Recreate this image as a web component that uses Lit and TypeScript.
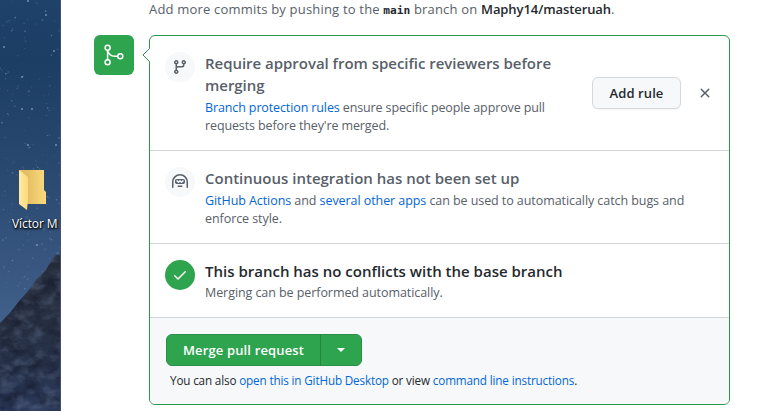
import { LitElement, html, css, svg } from "lit";
import { customElement } from "lit/decorators.js";

const BRANCH = "M11.75 2.5a.75.75 0 100 1.5.75.75 0 000-1.5zm-2.25.75a2.25 2.25 0 113 2.122V6A2.5 2.5 0 0110 8.5H6a1 1 0 00-1 1v1.128a2.251 2.251 0 11-1.5 0V5.372a2.25 2.25 0 111.5 0v1.836A2.492 2.492 0 016 7h4a1 1 0 001-1v-.628A2.25 2.25 0 019.5 3.25zM4.25 12a.75.75 0 100 1.5.75.75 0 000-1.5zM3.5 3.25a.75.75 0 111.5 0 .75.75 0 01-1.5 0z";
const HUBOT = "M0 8a8 8 0 1116 0v5.25a.75.75 0 01-1.5 0V8a6.5 6.5 0 10-13 0v5.25a.75.75 0 01-1.5 0V8zm5.5 4.25a.75.75 0 01.75-.75h3.5a.75.75 0 010 1.5h-3.5a.75.75 0 01-.75-.75zM3 6.75C3 5.784 3.784 5 4.75 5h6.5c.966 0 1.75.784 1.75 1.75v1.5A1.75 1.75 0 0111.25 10h-6.5A1.75 1.75 0 013 8.25v-1.5zm1.47-.53a.75.75 0 011.06 0l.97.97.97-.97a.75.75 0 011.06 0l.97.97.97-.97a.75.75 0 111.06 1.06l-1.5 1.5a.75.75 0 01-1.06 0L8 7.81l-.97.97a.75.75 0 01-1.06 0l-1.5-1.5a.75.75 0 010-1.06z";
const CHECK = "M13.78 4.22a.75.75 0 010 1.06l-7.25 7.25a.75.75 0 01-1.06 0L2.22 9.28a.75.75 0 011.06-1.06L6 10.94l6.72-6.72a.75.75 0 011.06 0z";
const CLOSE = "M3.72 3.72a.75.75 0 011.06 0L8 6.94l3.22-3.22a.75.75 0 111.06 1.06L9.06 8l3.22 3.22a.75.75 0 11-1.06 1.06L8 9.06l-3.22 3.22a.75.75 0 01-1.06-1.06L6.94 8 3.72 4.78a.75.75 0 010-1.06z";

const icon = (d: string) => html`<svg class="icon" width="16" height="16" viewBox="0 0 16 16"><path fill="currentColor" fill-rule="evenodd" d=${d} /></svg>`;

let seed = 17;
const rnd = () => (seed = (seed * 16807) % 2147483647) / 2147483647;
const stars = Array.from({ length: 170 }, () => ({ x: rnd() * 60, y: rnd() * 290, r: 0.4 + rnd() * 0.5, o: 0.1 + rnd() * 0.35 }));
const bright = [[22, 109], [32, 109], [37, 245], [4, 47], [28, 1], [22, 77], [28, 145], [56, 145], [46, 15], [54, 51]];
const RIDGE = "M0 323L10 313 20 300 29 290 36 280 46 270 53 258 56 255H61V411H0Z";

@customElement("desk-wallpaper")
export class DeskWallpaper extends LitElement {
  static styles = css`
    :host { display: block; position: relative; width: 61px; height: 411px; overflow: hidden; }
    .sky { display: block; }
    .item { position: absolute; left: 0; top: 168px; width: 61px; }
    .folder { display: block; margin-left: 18px; }
    .label { display: block; margin: 2px 0 0 12px; font: 12px/20px "Open Sans", "Noto Sans", sans-serif; letter-spacing: -0.1px; color: #fff; white-space: nowrap; text-shadow: 1px 1px 2px #000, 0 1px 2px #000; }
  `;
  render() {
    return html`
      <svg class="sky" width="61" height="411" viewBox="0 0 61 411">
        <defs>
          <linearGradient id="sky" x2="0" y2="1">
            <stop offset="0" stop-color="#1f426a" /><stop offset=".15" stop-color="#1c3d64" />
            <stop offset=".4" stop-color="#284870" /><stop offset=".65" stop-color="#38567f" />
            <stop offset=".8" stop-color="#42628c" />
          </linearGradient>
          <linearGradient id="rock" x2="0" y2="1">
            <stop offset="0" stop-color="#2d3443" /><stop offset=".45" stop-color="#262e40" /><stop offset="1" stop-color="#2a3859" />
          </linearGradient>
          <clipPath id="ridge"><path d=${RIDGE} /></clipPath>
          <filter id="stone" x="0" y="0" width="1" height="1" color-interpolation-filters="sRGB">
            <feTurbulence type="fractalNoise" baseFrequency=".07 .1" numOctaves="4" seed="8" />
            <feColorMatrix values="0 0 0 0 .35  0 0 0 0 .41  0 0 0 0 .52  2.6 0 0 0 -1.15" />
          </filter>
          <filter id="shade" x="0" y="0" width="1" height="1" color-interpolation-filters="sRGB">
            <feTurbulence type="fractalNoise" baseFrequency=".05 .07" numOctaves="4" seed="21" />
            <feColorMatrix values="0 0 0 0 .08  0 0 0 0 .1  0 0 0 0 .16  3 0 0 0 -1.25" />
          </filter>
        </defs>
        <rect width="61" height="411" fill="url(#sky)" />
        ${stars.map((s) => svg`<circle cx=${s.x} cy=${s.y} r=${s.r} fill="#9fbbd8" opacity=${s.o} />`)}
        ${bright.map(([x, y]) => svg`<circle cx=${x} cy=${y} r=".9" fill="#a9c4df" opacity=".65" />`)}
        <path d=${RIDGE} fill="url(#rock)" />
        <g clip-path="url(#ridge)">
          <rect y="250" width="61" height="161" filter="url(#shade)" opacity=".6" />
          <rect y="250" width="61" height="161" filter="url(#stone)" opacity=".5" />
        </g>
        <rect x="60" width="1" height="411" fill="#454f60" />
      </svg>
      <div class="item">
        <svg class="folder" width="30" height="44" viewBox="0 0 30 44">
          <defs>
            <linearGradient id="back"><stop offset=".3" stop-color="#e4be62" /><stop offset="1" stop-color="#fbdb7e" /></linearGradient>
            <linearGradient id="front"><stop stop-color="#ffeaa6" /><stop offset="1" stop-color="#fbd97c" /></linearGradient>
          </defs>
          <path d="M1 2H26V22L28 24V36H5Z" fill="url(#back)" />
          <path d="M1 2L10 9V31L9 42 1 36Z" fill="url(#front)" />
        </svg>
        <span class="label">Víctor M</span>
      </div>`;
  }
}

@customElement("app-root")
export class AppRoot extends LitElement {
  static styles = css`
    :host { display: flex; width: 778px; height: 411px; overflow: hidden; background: #fff; color: #24292e; font-family: "Open Sans", "Noto Sans", sans-serif; font-size: 13px; }
    * { box-sizing: border-box; }
    .icon { display: block; }
    .page { flex: 1; padding-left: 33px; }
    .push { height: 35px; padding-left: 55px; line-height: 19px; color: #586069; white-space: nowrap; letter-spacing: 0.19px; }
    .push b { font-weight: 600; color: #24292e; letter-spacing: -0.08px; }
    .push code { font: 600 11.2px "DejaVu Sans Mono", "Liberation Mono", monospace; color: #24292e; letter-spacing: 0; }
    .merge { display: flex; gap: 15px; }
    .badge { display: grid; place-items: center; width: 40px; height: 40px; border-radius: 6px; background: #2ea44f; }
    .box { position: relative; width: 581px; height: 370px; border: 1px solid #2c974b; border-radius: 6px; }
    .tip { position: absolute; left: -8px; top: 10px; }
    .row { display: flex; padding: 16px 15px 0; border-bottom: 1px solid #d1d5da; color: #586069; }
    .r1 { height: 115px; } .r2 { height: 93px; } .r3 { height: 74px; }
    .round { flex: none; display: grid; place-items: center; width: 30px; height: 30px; margin-right: 10px; border-radius: 50%; background: #f6f8fa; }
    .ok { background: #2ea44f; color: #fff; }
    .copy { flex: 1; white-space: nowrap; }
    .title { margin: 0; font-size: 15px; line-height: 22px; font-weight: 600; letter-spacing: 0; }
    .r1 .title { letter-spacing: -0.03px; }
    .strong { color: #24292e; }
    .text { margin: 3px 0 0; line-height: 18px; font-size: 12.5px; letter-spacing: -0.07px; }
    .r1 .text { letter-spacing: -0.12px; }
    .r3 .text { margin-top: 2px; }
    a { color: #0366d6; text-decoration: none; }
    .actions { display: flex; align-items: center; gap: 16px; height: 32px; margin: 25px 1px 0 0; }
    .btn { display: grid; place-items: center; width: 89px; height: 32px; border: 1px solid #d5d8da; border-radius: 6px; background: #f6f8fa; color: #24292e; font-size: 13px; font-weight: 600; letter-spacing: 0.1px; box-shadow: 0 1px 0 rgba(27, 31, 35, .04); }
    .foot { height: 86px; padding: 16px; background: #f6f8fa; border-radius: 0 0 5px 5px; }
    .split { display: flex; width: 196px; height: 32px; border: 1px solid #2a8f47; border-radius: 6px; background: #2ea44f; color: #fff; font-size: 13px; font-weight: 600; letter-spacing: 0.14px; }
    .main { display: grid; place-items: center; width: 154px; border-right: 1px solid #268441; }
    .more { flex: 1; display: grid; place-items: center; }
    .caret { border: 4px solid transparent; border-top-color: #fff; border-bottom: 0; }
    .hint { padding: 5px 0 0 4px; font-size: 11.7px; line-height: 18px; white-space: nowrap; letter-spacing: -0.15px; }
  `;
  render() {
    return html`
      <desk-wallpaper></desk-wallpaper>
      <div class="page">
        <div class="push">Add more commits by pushing to the <code>main</code> branch on <b>Maphy14/masteruah</b>.</div>
        <div class="merge">
          <div class="badge">
            <svg width="24" height="24" viewBox="0 0 24 24" fill="none" stroke="#fff" stroke-width="1.5">
              <circle cx="5.6" cy="4.7" r="2.5" /><circle cx="5.6" cy="19.3" r="2.5" /><circle cx="18.3" cy="13.3" r="2.5" />
              <path d="M5.6 7.2V16.8M5.6 7.2C6.3 11 9.3 13.3 12.8 13.3H15.8" />
            </svg>
          </div>
          <div class="box">
            <svg class="tip" width="9" height="18" viewBox="0 0 9 18"><path d="M8 0V1L1 9 8 17V18H9V0Z" fill="#fff" /><path d="M7.5 0V2.5L1 9 7.5 15.5V18" fill="none" stroke="#2c974b" /></svg>
            <div class="row r1">
              <span class="round">${icon(BRANCH)}</span>
              <div class="copy">
                <h3 class="title">Require approval from specific reviewers before<br />merging</h3>
                <p class="text"><a>Branch protection rules</a> ensure specific people approve pull<br />requests before they're merged.</p>
              </div>
              <div class="actions"><span class="btn">Add rule</span>${icon(CLOSE)}</div>
            </div>
            <div class="row r2">
              <span class="round">${icon(HUBOT)}</span>
              <div class="copy">
                <h3 class="title">Continuous integration has not been set up</h3>
                <p class="text"><a>GitHub Actions</a> and <a>several other apps</a> can be used to automatically catch bugs and<br />enforce style.</p>
              </div>
            </div>
            <div class="row r3">
              <span class="round ok">${icon(CHECK)}</span>
              <div class="copy">
                <h3 class="title strong">This branch has no conflicts with the base branch</h3>
                <p class="text">Merging can be performed automatically.</p>
              </div>
            </div>
            <div class="foot">
              <div class="split"><span class="main">Merge pull request</span><span class="more"><i class="caret"></i></span></div>
              <div class="hint">You can also <a>open this in GitHub Desktop</a> or view <a>command line instructions</a>.</div>
            </div>
          </div>
        </div>
      </div>`;
  }
}
